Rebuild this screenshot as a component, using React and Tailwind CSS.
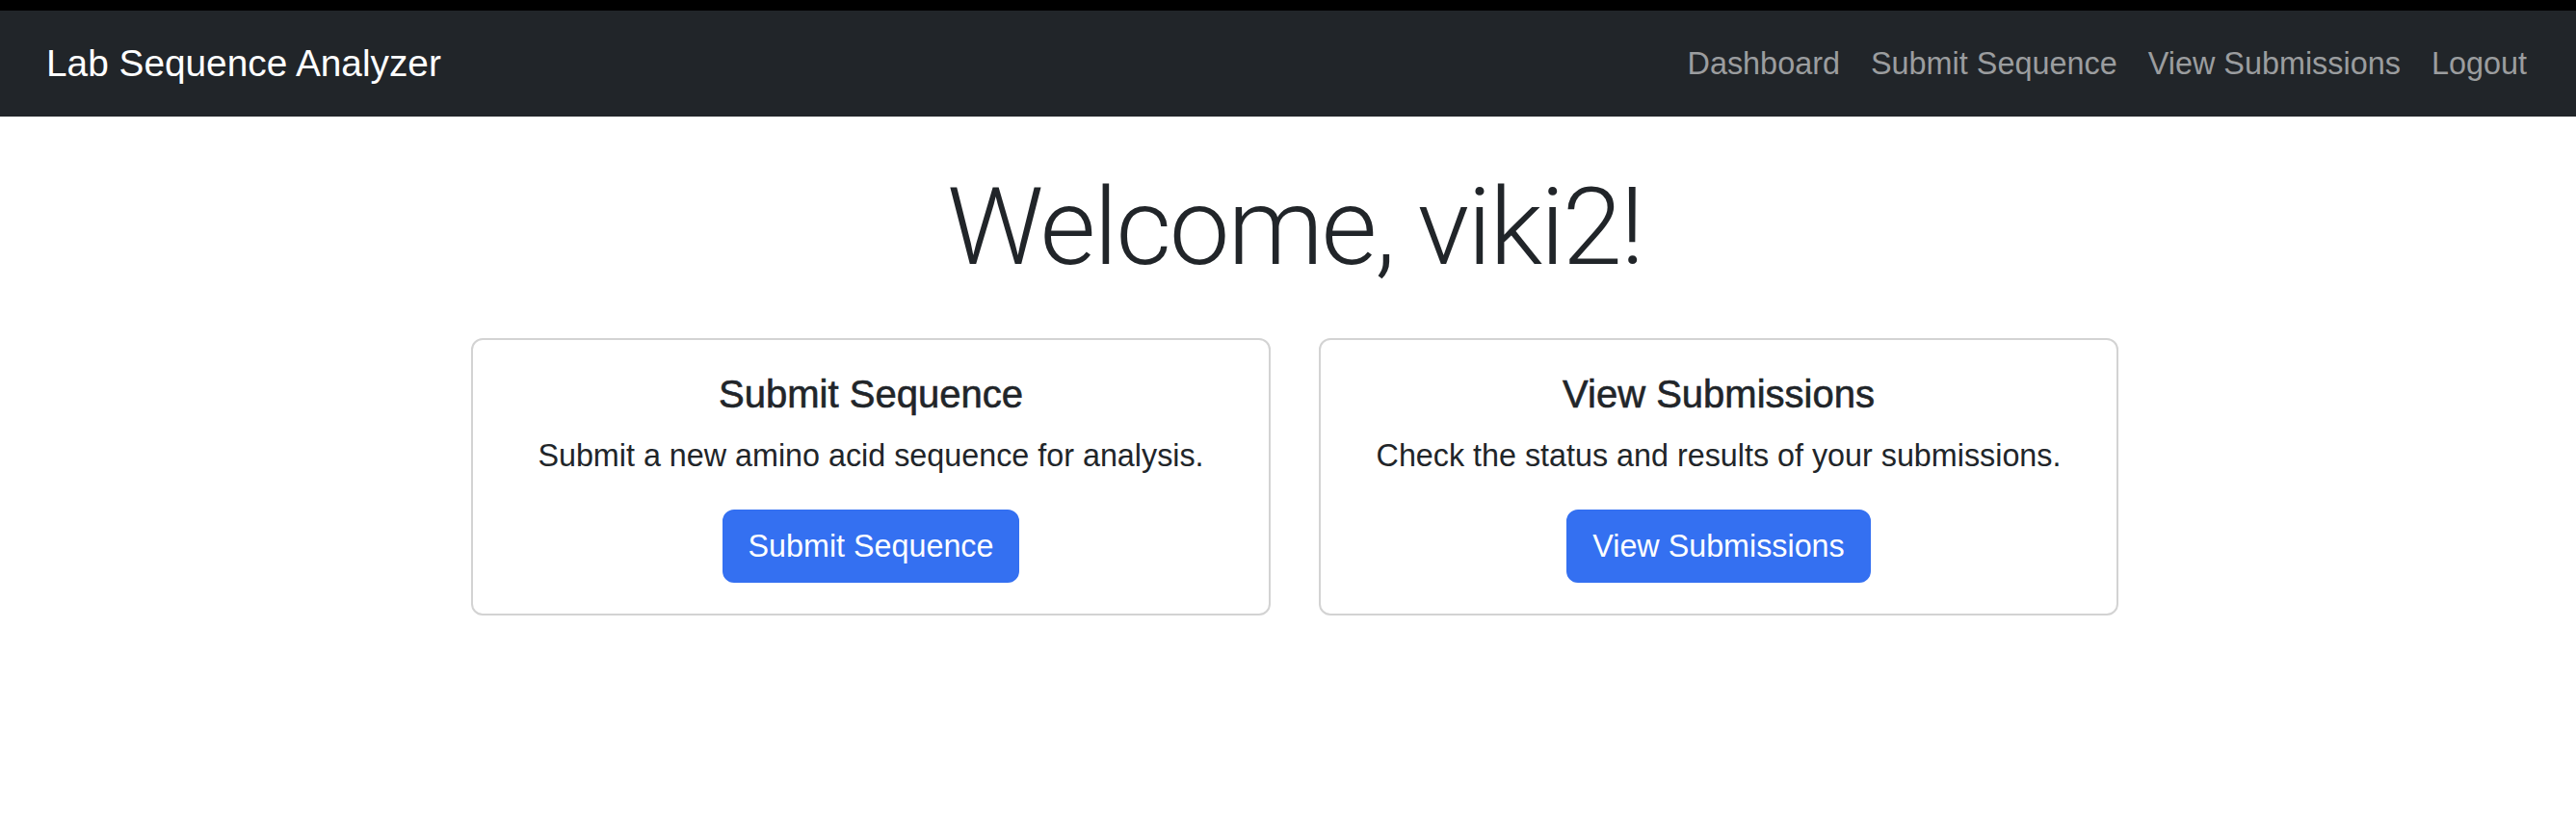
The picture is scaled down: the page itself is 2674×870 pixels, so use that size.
export default function App() {
  const sans = { fontFamily: '"Liberation Sans", Arial, sans-serif' };
  return (
    <div className="min-h-[870px] bg-white text-[#212529]" style={sans}>
      <div className="h-[11px] bg-black" />
      <nav className="flex h-[110px] items-center justify-between bg-[#212529] pl-[48px] pr-[51px]">
        <a className="text-[38.8px] leading-[60px] text-white" href="#">Lab Sequence Analyzer</a>
        <div className="flex items-center gap-[32px] text-[32.4px] leading-[48px] text-[#9b9d9f]">
          <a href="#">Dashboard</a>
          <a href="#">Submit Sequence</a>
          <a href="#">View Submissions</a>
          <a href="#">Logout</a>
        </div>
      </nav>
      <main className="flex flex-col items-center pl-[14px]">
        <h1
          className="mt-[48px] text-[112px] font-light leading-[134px] tracking-[-2.2px]"
          style={{ fontFamily: 'Roboto, "Liberation Sans", sans-serif' }}
        >
          Welcome, viki2!
        </h1>
        <div className="mt-[48px] flex gap-[50px]">
          <Card
            title="Submit Sequence"
            text="Submit a new amino acid sequence for analysis."
            button="Submit Sequence"
          />
          <Card
            title="View Submissions"
            text="Check the status and results of your submissions."
            button="View Submissions"
          />
        </div>
      </main>
    </div>
  );
}

function Card({ title, text, button }) {
  return (
    <div className="flex w-[830px] flex-col items-center rounded-[12px] border-2 border-[#d3d3d3] p-[32px] text-center">
      <h5 className="mb-[16px] text-[40px] font-medium leading-[48px] [-webkit-text-stroke:0.6px_#212529]">{title}</h5>
      <p className="mb-[32px] text-[32.3px] leading-[48px]">{text}</p>
      <a
        href="#"
        className="rounded-[12px] border-2 border-[#3470f1] bg-[#3470f1] px-[25px] py-[12px] text-[32.3px] leading-[48px] text-white"
      >
        {button}
      </a>
    </div>
  );
}
